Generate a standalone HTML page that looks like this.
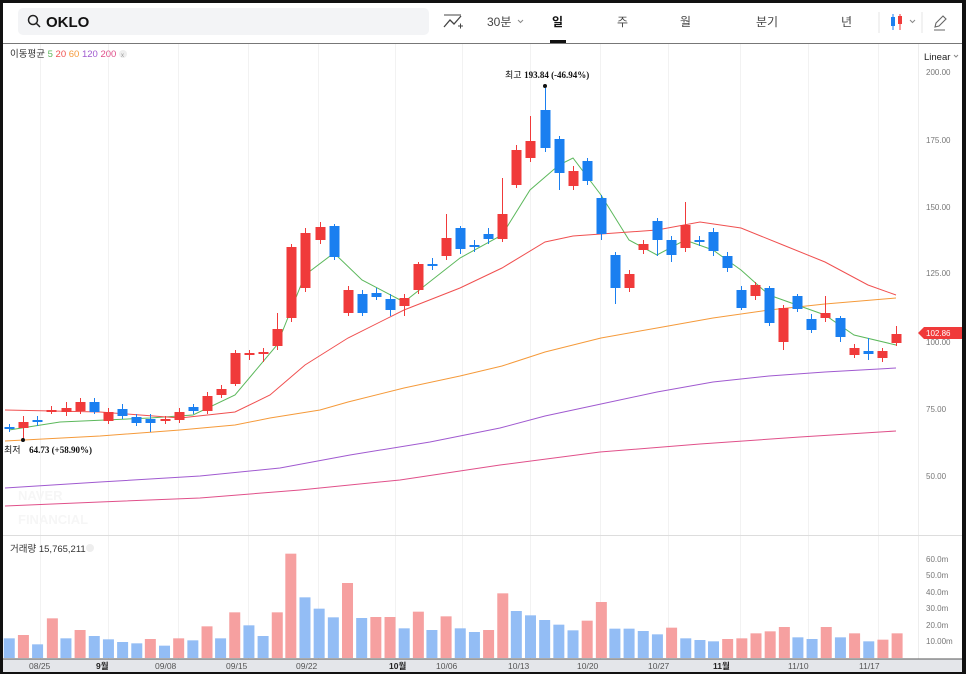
<!DOCTYPE html>
<html><head><meta charset="utf-8"><style>
*{margin:0;padding:0;box-sizing:border-box}
body{width:966px;height:674px;background:#111;overflow:hidden;font-family:"Liberation Sans","Noto Sans CJK KR",sans-serif;position:relative}
#w{position:absolute;left:3px;top:3px;width:959px;height:669px;background:#fff}
.t{position:absolute;font-size:12px;color:#333}
</style></head><body>
<div id="w"></div>
<svg id="s" width="966" height="674" style="position:absolute;left:0;top:0" xmlns="http://www.w3.org/2000/svg" font-family="Liberation Sans, Noto Sans CJK KR, sans-serif">
<rect x="18" y="8" width="411" height="27" rx="5" fill="#f3f4f6"/>
<circle cx="33" cy="20" r="4.5" fill="none" stroke="#222" stroke-width="1.5"/><line x1="36.5" y1="23.5" x2="40" y2="27" stroke="#222" stroke-width="1.5"/>
<text x="46" y="27" font-size="15" font-weight="bold" fill="#111">OKLO</text>
<path d="M444 27 L450 20 L454 24 L461 16" fill="none" stroke="#444" stroke-width="1.3"/><line x1="444" y1="15" x2="461" y2="15" stroke="#444"/><path d="M458 26h5M460.5 23.5v5" stroke="#444"/>
<text x="487" y="26" font-size="12" fill="#444">30분</text><path d="M518 20l2.5 2.5 2.5-2.5" fill="none" stroke="#888"/>
<text x="552" y="26" font-size="12" font-weight="bold" fill="#111">일</text>
<rect x="550" y="40" width="16" height="3" fill="#111"/>
<text x="617" y="26" font-size="12" fill="#444">주</text>
<text x="680" y="26" font-size="12" fill="#444">월</text>
<text x="756" y="26" font-size="12" fill="#444">분기</text>
<text x="841" y="26" font-size="12" fill="#444">년</text>
<line x1="879" y1="12" x2="879" y2="33" stroke="#e5e5e5"/>
<line x1="893" y1="14" x2="893" y2="30" stroke="#1a7ff0"/><rect x="891" y="17" width="4" height="9" fill="#1a7ff0"/>
<line x1="900" y1="14" x2="900" y2="30" stroke="#f03a3a"/><rect x="898" y="16" width="4" height="8" fill="#f03a3a"/>
<path d="M910 20l2.5 2.5 2.5-2.5" fill="none" stroke="#888"/>
<line x1="922" y1="12" x2="922" y2="33" stroke="#e5e5e5"/>
<path d="M935 27l1-4 7-7 3 3-7 7z M934 30h11" fill="none" stroke="#666" stroke-width="1.1"/>
<line x1="3" y1="43.5" x2="962" y2="43.5" stroke="#777"/>
<g id="grid" stroke="#f2f2f2"></g>
<line x1="918.5" y1="44" x2="918.5" y2="660" stroke="#eee"/>
<line x1="3" y1="535.5" x2="962" y2="535.5" stroke="#ddd"/>
<text x="10" y="57" font-size="9.5" fill="#333">이동평균 <tspan fill="#5cb85c">5</tspan> <tspan fill="#f05050">20</tspan> <tspan fill="#f59a3a">60</tspan> <tspan fill="#a05ad0">120</tspan> <tspan fill="#e0508a">200</tspan></text>
<circle cx="123" cy="54" r="4" fill="#eee"/><text x="121" y="57" font-size="6" fill="#999">x</text>
<text x="924" y="60" font-size="9.5" fill="#222">Linear</text><path d="M954 55l2 2 2-2" fill="none" stroke="#888"/>
<g font-size="8" fill="#777">
<text x="926" y="75">200.00</text><text x="926" y="143">175.00</text><text x="926" y="210">150.00</text><text x="926" y="276">125.00</text><text x="926" y="345">100.00</text><text x="926" y="412">75.00</text><text x="926" y="479">50.00</text>
<text x="926" y="562">60.0m</text><text x="926" y="578">50.0m</text><text x="926" y="595">40.0m</text><text x="926" y="611">30.0m</text><text x="926" y="628">20.0m</text><text x="926" y="644">10.00m</text>
</g>
<path d="M918 333 L924 327 H962 V339 H924 Z" fill="#f03a3a"/><text x="926" y="336" font-size="8" fill="#fff">102.86</text>
<text x="18" y="500" font-size="13" font-weight="bold" fill="#f6f6f6">NAVER</text><text x="18" y="524" font-size="13" font-weight="bold" fill="#f6f6f6">FINANCIAL</text>
<g id="ma" fill="none" stroke-width="1"></g>
<g id="c"></g>
<g id="v"></g>
<circle cx="545" cy="86" r="2" fill="#111"/><text x="505" y="78" font-size="9" fill="#111">최고 <tspan font-family="Liberation Serif" font-weight="bold">193.84 (-46.94%)</tspan></text>
<circle cx="23" cy="440" r="2" fill="#111"/><text x="4" y="453" font-size="9" fill="#111">최저 <tspan font-family="Liberation Serif" font-weight="bold" dx="6">64.73 (+58.90%)</tspan></text>
<text x="10" y="552" font-size="9.5" fill="#333">거래량 15,765,211</text><circle cx="90" cy="548" r="4" fill="#eee"/>
<rect x="3" y="659" width="959" height="13" fill="#e4e6ea"/>
<line x1="3" y1="659" x2="962" y2="659" stroke="#555"/>
<g font-size="8.5" fill="#555"><text x="29" y="669">08/25</text><text x="96" y="669" font-weight="bold" fill="#222">9월</text><text x="155" y="669">09/08</text><text x="226" y="669">09/15</text><text x="296" y="669">09/22</text><text x="389" y="669" font-weight="bold" fill="#222">10월</text><text x="436" y="669">10/06</text><text x="508" y="669">10/13</text><text x="577" y="669">10/20</text><text x="648" y="669">10/27</text><text x="713" y="669" font-weight="bold" fill="#222">11월</text><text x="788" y="669">11/10</text><text x="859" y="669">11/17</text></g>
</svg>
<script>
var NS="http://www.w3.org/2000/svg";
function el(p,t,a){var e=document.createElementNS(NS,t);for(var k in a)e.setAttribute(k,a[k]);document.getElementById(p).appendChild(e);}
[40,108,178,248,318,395,462,530,600,668,740,808,878].forEach(function(x){el("grid","line",{x1:x+.5,y1:44,x2:x+.5,y2:659});});
var C=[[9,427,429,424,432,'b'],[23,428,422,416,440,'r'],[37,420,421,416,426,'b'],[51,410,411,406,414,'r'],[66,412,408,402,416,'r'],[80,411,402,398,414,'r'],[94,402,412,398,414,'b'],[108,421,412,408,424,'r'],[122,409,416,404,419,'b'],[136,417,423,414,426,'b'],[150,419,423,414,432,'b'],[165,421,419,416,424,'r'],[179,420,412,408,423,'r'],[193,407,411,404,414,'b'],[207,411,396,392,414,'r'],[221,395,389,385,398,'r'],[235,384,353,350,386,'r'],[249,353,354,350,360,'r'],[263,352,353,348,362,'r'],[277,346,329,313,350,'r'],[291,318,247,244,322,'r'],[305,288,233,228,292,'r'],[320,240,227,222,244,'r'],[334,226,257,224,260,'b'],[348,313,290,286,316,'r'],[362,294,313,290,316,'b'],[376,293,297,288,300,'b'],[390,299,310,294,316,'b'],[404,306,298,294,316,'r'],[418,290,264,262,294,'r'],[432,264,265,258,270,'b'],[446,256,238,214,260,'r'],[460,228,249,226,254,'b'],[474,245,246,240,252,'b'],[488,234,239,228,244,'b'],[502,239,214,178,242,'r'],[516,185,150,145,188,'r'],[530,158,141,116,162,'r'],[545,110,148,88,152,'b'],[559,139,173,136,190,'b'],[573,186,171,166,190,'r'],[587,161,181,158,185,'b'],[601,198,234,195,240,'b'],[615,255,288,252,304,'b'],[629,288,274,270,292,'r'],[643,250,244,240,254,'r'],[657,221,240,218,256,'b'],[671,240,255,236,262,'b'],[685,248,225,202,252,'r'],[699,240,241,236,246,'b'],[713,232,251,228,256,'b'],[727,256,268,252,272,'b'],[741,290,308,286,310,'b'],[755,296,285,282,300,'r'],[769,288,323,286,326,'b'],[783,342,308,305,350,'r'],[797,296,309,294,312,'b'],[811,319,330,314,333,'b'],[825,318,313,296,322,'r'],[840,318,337,316,342,'b'],[854,355,348,344,358,'r'],[868,351,354,338,360,'b'],[882,358,351,348,362,'r'],[896,343,334,326,346,'r']];
C.forEach(function(c){var col=c[5]=='r'?'#f03a3a':'#1a7ff0';el("c","line",{x1:c[0]+.5,y1:c[3],x2:c[0]+.5,y2:c[4],stroke:col});var t=Math.min(c[1],c[2]),h=Math.max(2,Math.abs(c[1]-c[2]));el("c","rect",{x:c[0]-4.5,y:t,width:10,height:h,fill:col});});
var V=[[15,325,'b'],[38,315,'r'],[61,343,'b'],[85,265,'r'],[107,325,'b'],[130,300,'r'],[153,318,'b'],[176,328,'b'],[199,336,'b'],[222,340,'b'],[244,327,'r'],[267,347,'b'],[290,325,'r'],[313,331,'b'],[336,289,'r'],[358,325,'b'],[381,247,'r'],[404,286,'b'],[427,318,'b'],[450,247,'r'],[472,71,'r'],[495,202,'b'],[518,236,'b'],[541,262,'b'],[564,159,'r'],[587,264,'b'],[610,261,'r'],[633,261,'r'],[656,295,'b'],[679,245,'r'],[701,300,'b'],[724,259,'r'],[747,295,'b'],[770,306,'b'],[793,300,'r'],[816,190,'r'],[838,243,'b'],[861,256,'b'],[884,270,'b'],[907,284,'b'],[930,301,'b'],[953,272,'r'],[976,216,'r'],[998,296,'b'],[1021,296,'b'],[1044,303,'b'],[1067,313,'b'],[1090,293,'r'],[1113,325,'b'],[1136,330,'b'],[1158,334,'b'],[1181,327,'r'],[1204,325,'r'],[1227,310,'r'],[1250,304,'r'],[1273,291,'r'],[1295,322,'b'],[1318,327,'b'],[1341,291,'r'],[1364,322,'b'],[1387,310,'r'],[1410,334,'b'],[1433,329,'r'],[1456,310,'r']];
V.forEach(function(v){var x=v[0]/1.623,t=530+v[1]/3;el("v","rect",{x:x-5.5,y:t,width:11,height:658-t,fill:v[2]=='r'?'#f6a0a0':'#93bdf5'});});
var M=[['#5cb85c',"9,430 60,422 150,418 193,415 235,395 277,345 305,275 334,253 362,280 404,302 432,280 460,258 502,235 530,190 559,165 573,158 601,195 629,240 657,255 685,240 713,250 741,270 769,295 797,305 825,315 854,335 896,345"],['#f05050',"5,410 100,412 180,418 235,412 270,395 305,365 348,338 404,310 460,288 502,268 545,242 573,236 601,234 657,230 700,222 741,228 783,245 825,262 868,285 896,295"],['#f59a3a',"5,441 100,436 180,430 235,425 270,418 320,410 348,402 404,388 460,376 502,366 545,352 601,338 657,328 713,318 769,310 825,304 896,298"],['#a05ad0',"5,488 100,482 200,476 280,468 350,455 430,442 500,428 545,416 601,404 657,392 713,382 769,376 825,372 896,368"],['#e0508a',"5,506 100,502 200,498 300,490 400,480 500,465 600,452 700,444 800,437 896,431"]];
M.forEach(function(m){el("ma","polyline",{points:m[1],stroke:m[0]});});
</script>
</body></html>
